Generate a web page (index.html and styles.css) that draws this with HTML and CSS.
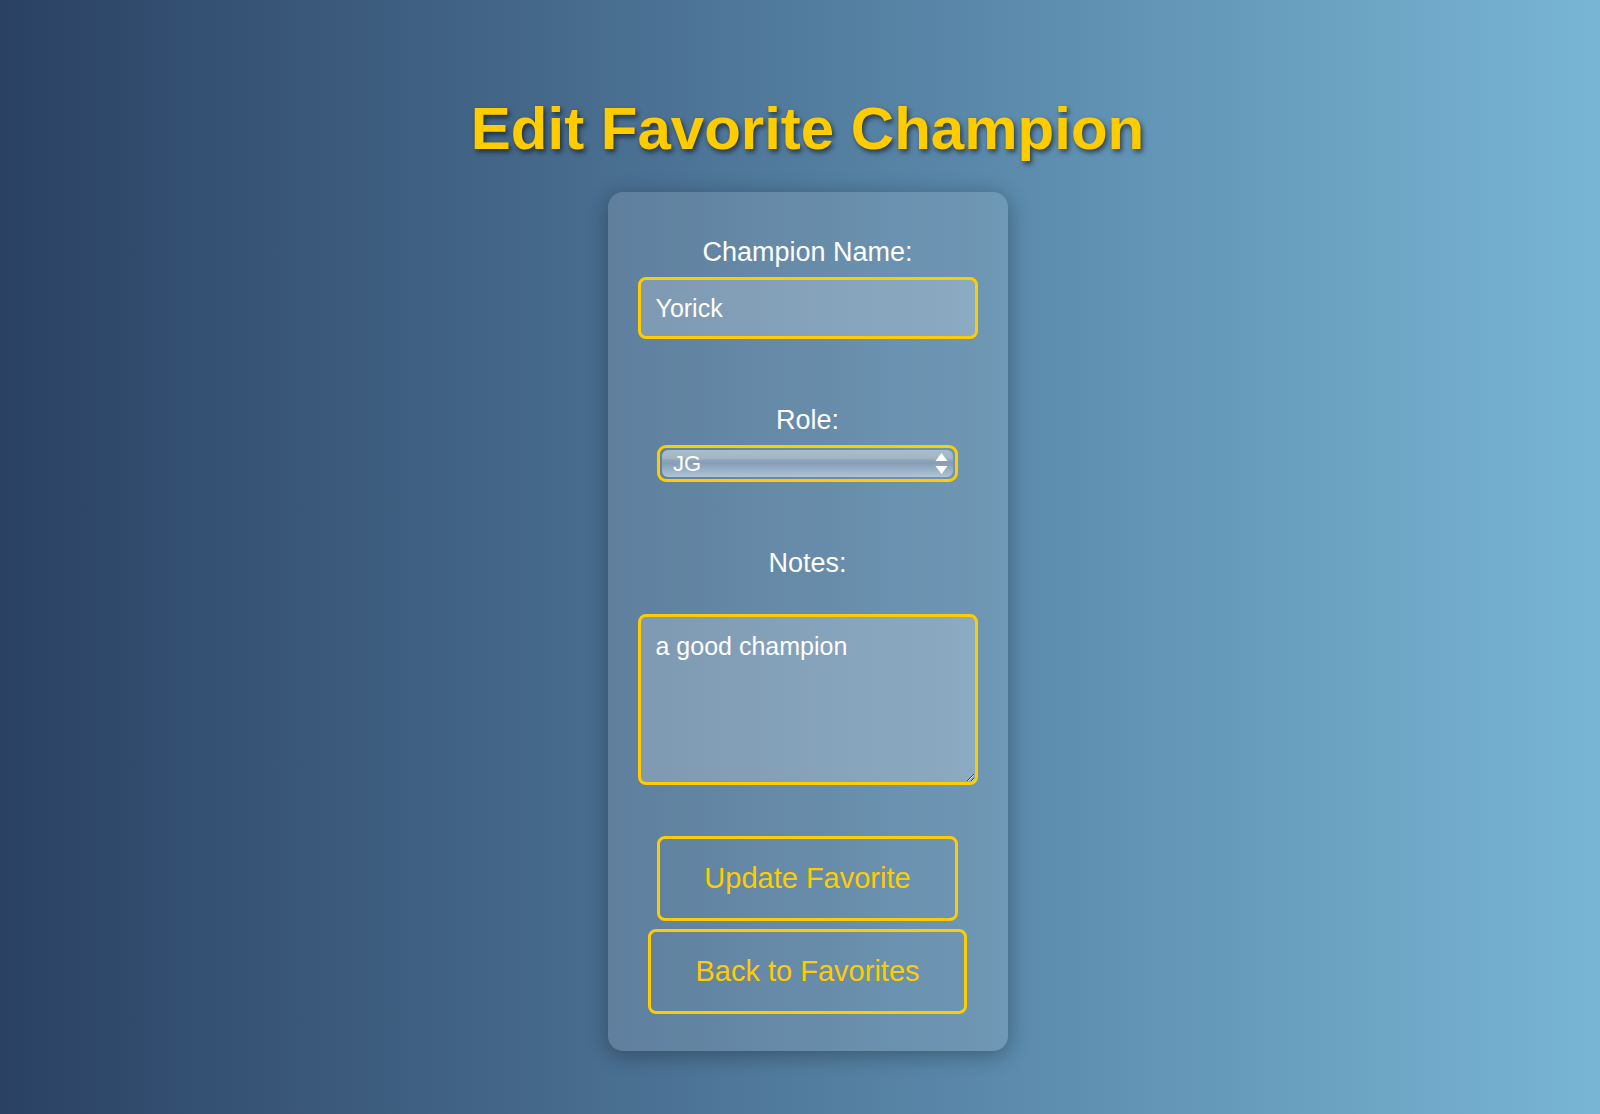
FILE: index.html
```html
<!DOCTYPE html>
<html lang="en">
<head>
<meta charset="utf-8">
<title>Edit Favorite Champion</title>
<link rel="stylesheet" href="styles.css">
</head>
<body>
<main class="page">
  <h1 class="title">Edit Favorite Champion</h1>
  <form class="card">
    <div class="group group-first">
      <label class="label" for="name">Champion Name:</label>
      <input class="field" id="name" type="text" value="Yorick">
    </div>
    <div class="group">
      <label class="label" for="role">Role:</label>
      <div class="select-wrap">
        <select class="select" id="role">
          <option>JG</option>
          <option>TOP</option>
          <option>MID</option>
          <option>ADC</option>
          <option>SUP</option>
        </select>
        <svg class="select-arrows" width="13" height="24" viewBox="0 0 13 24" aria-hidden="true">
          <path d="M6.5 1 L12.5 9 L0.5 9 Z" fill="#fff"/>
          <path d="M0.5 14 L12.5 14 L6.5 22 Z" fill="#fff"/>
        </svg>
      </div>
    </div>
    <div class="group">
      <label class="label label-notes" for="notes">Notes:</label>
      <textarea class="field area" id="notes">a good champion</textarea>
    </div>
    <div class="actions">
      <button class="btn" type="submit">Update Favorite</button>
      <button class="btn" type="button">Back to Favorites</button>
    </div>
  </form>
</main>
</body>
</html>
```

FILE: styles.css
```css
html, body {
  margin: 0;
  padding: 0;
  height: 100%;
}

body {
  background: linear-gradient(to right, #2a4163 0%, #4e7698 45%, #78b5d5 100%);
  font-family: "Liberation Sans", Arial, Helvetica, sans-serif;
  color: #fff;
}

.page {
  display: flex;
  flex-direction: column;
  align-items: center;
  padding-left: 15px;
  padding-top: 94px;
}

.title {
  margin: 0 0 29px;
  font-size: 60px;
  line-height: 69px;
  font-weight: bold;
  color: #ffcc00;
  text-shadow: 2px 3px 5px rgba(0, 0, 0, 0.55);
}

.card {
  box-sizing: border-box;
  width: 400px;
  padding: 30px 30px 37px;
  background: rgba(255, 255, 255, 0.12);
  border-radius: 15px;
  box-shadow: 0 4px 22px rgba(0, 0, 0, 0.32);
  display: flex;
  flex-direction: column;
  align-items: center;
}

.group {
  width: 100%;
  display: flex;
  flex-direction: column;
  align-items: center;
  margin-top: 66px;
}

.group-first {
  margin-top: 15px;
}

.label {
  display: block;
  font-size: 27px;
  line-height: 30px;
  margin-bottom: 10px;
  color: #fff;
}

.label-notes {
  margin-bottom: 36px;
}

.field {
  box-sizing: border-box;
  width: 100%;
  margin: 0;
  border: 3px solid #ffcc00;
  border-radius: 8px;
  background: rgba(255, 255, 255, 0.2);
  color: #fff;
  font-family: "Liberation Sans", Arial, Helvetica, sans-serif;
  font-size: 25px;
  line-height: 28px;
  padding: 14px 15px;
  outline: none;
}

.area {
  height: 171px;
  padding: 15px 15px;
  resize: vertical;
  display: block;
}

.select-wrap {
  position: relative;
  box-sizing: border-box;
  width: 301px;
  height: 37px;
  border: 3px solid #ffcc00;
  border-radius: 9px;
  padding: 2px;
}

.select {
  -webkit-appearance: none;
  appearance: none;
  box-sizing: border-box;
  display: block;
  width: 100%;
  height: 100%;
  margin: 0;
  border: none;
  border-radius: 6px;
  padding: 0 30px 0 11px;
  background: linear-gradient(180deg, #aabdcc 0%, #a2b6c7 30%, #8aa1b7 40%, #879fb5 50%, #9ab2c6 75%, #b0c5d5 100%);
  color: #fff;
  font-family: "Liberation Sans", Arial, Helvetica, sans-serif;
  font-size: 22px;
  line-height: 27px;
  outline: none;
}

.select-arrows {
  position: absolute;
  right: 7px;
  top: 4px;
  pointer-events: none;
}

.actions {
  display: flex;
  flex-direction: column;
  align-items: center;
  gap: 8px;
  margin-top: 51px;
}

.btn {
  margin: 0;
  padding: 22px 44px;
  border: 3px solid #ffcc00;
  border-radius: 8px;
  background: transparent;
  color: #ffcc00;
  font-family: "Liberation Sans", Arial, Helvetica, sans-serif;
  font-size: 29px;
  line-height: 35px;
  cursor: pointer;
}
```
